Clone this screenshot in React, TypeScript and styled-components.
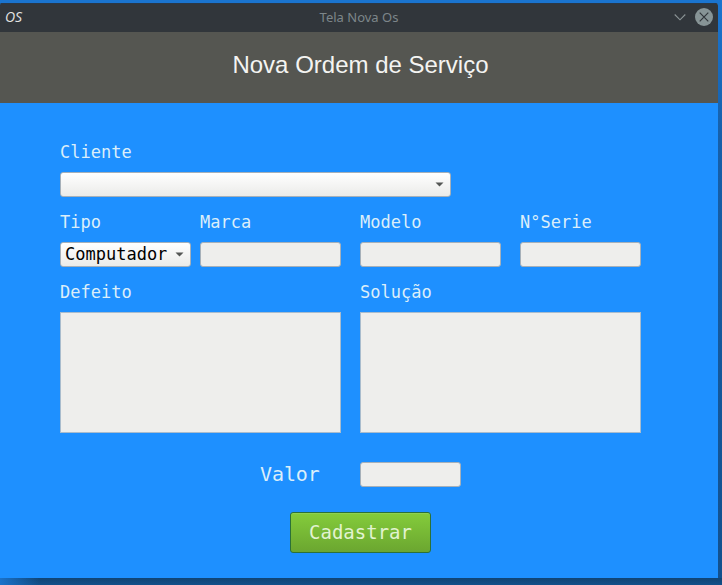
import React from 'react';
import styled, { createGlobalStyle } from 'styled-components';

const GlobalStyle = createGlobalStyle`
  * { box-sizing: border-box; }
  body { margin: 0; overflow: hidden; }
`;

const Desktop = styled.main`
  width: 722px;
  height: 585px;
  padding-top: 3px;
  overflow: hidden;
  background:
    linear-gradient(90deg, #1a72ca 0, rgba(17, 76, 132, 0) 40px) 0 578px / 100% 7px no-repeat,
    linear-gradient(#104474, #12508a) 0 578px / 100% 7px no-repeat,
    linear-gradient(180deg, #1a75d0 0, #165fa9 140px, #12508d 100%) 718px 0 / 4px 100% no-repeat,
    #1a74cf;
`;

const Window = styled.section`
  display: flex;
  flex-direction: column;
  width: 718px;
  height: 575px;
  border-radius: 2px 3px 0 0;
  overflow: hidden;
  background: #1e90ff;
`;

const TitleBar = styled.div`
  display: grid;
  grid-template-columns: 60px 1fr 60px;
  align-items: center;
  height: 29px;
  padding-bottom: 2px;
  background: #31363b;
  border-top: 1px solid #2a3847;
`;

const AppMark = styled.span`
  padding-left: 5px;
  font: italic 500 14px/26px 'Open Sans', sans-serif;
  letter-spacing: 0;
  color: #e4e4e4;
`;

const WindowTitle = styled.span`
  text-align: center;
  font: 13px/26px 'Noto Sans', sans-serif;
  color: #7d868a;
`;

const WindowControls = styled.div`
  display: flex;
  justify-content: flex-end;
  padding-right: 4px;
  svg { display: block; }
`;

const Header = styled.header`
  height: 71px;
  background: #555651;
  color: #f4f4f2;
  text-align: center;
`;

const Heading = styled.h1`
  margin: 0;
  padding-left: 3px;
  font: 400 24px/66px 'Liberation Sans', Arial, sans-serif;
`;

const Form = styled.div`
  display: flex;
  flex-direction: column;
  padding: 34px 0 0 60px;
  font-family: 'DejaVu Sans Mono', monospace;
`;

const Row = styled.div<{ $height: number }>`
  display: flex;
  height: ${p => p.$height}px;
`;

const Field = styled.label<{ $width: number; $gap?: number }>`
  display: flex;
  flex-direction: column;
  width: ${p => p.$width}px;
  margin-right: ${p => p.$gap ?? 0}px;
`;

const Caption = styled.span`
  height: 35px;
  font-size: 17px;
  line-height: 30px;
  color: #dbeefa;
`;

const Input = styled.input`
  display: block;
  width: 100%;
  height: 25px;
  padding: 0 4px;
  border: 1px solid #a6b0b9;
  border-radius: 3px;
  background: #eeeeec;
  outline: none;
`;

const TextArea = styled.textarea`
  display: block;
  width: 100%;
  height: 121px;
  border: 1px solid #a9bccd;
  border-radius: 0;
  background: #eeeeec;
  resize: none;
  outline: none;
`;

const Combo = styled.div`
  display: flex;
  align-items: center;
  justify-content: space-between;
  height: 25px;
  padding: 0 6px 0 4px;
  border: 1px solid #a6b0b9;
  border-radius: 3px;
  background: linear-gradient(#ffffff, #ebebe9);
  color: #000;
  font-size: 17px;
  line-height: 23px;
`;

const ValueRow = styled.label`
  display: flex;
  align-items: center;
  width: 401px;
  height: 25px;
  margin-top: 15px;
  padding-left: 200px;
  font-size: 20px;
  color: #dbeefa;
`;

const ValueCaption = styled.span`
  flex: 0 0 100px;
  padding-bottom: 2px;
  letter-spacing: -0.1px;
`;

const SubmitButton = styled.button`
  width: 141px;
  height: 41px;
  margin: 25px 0 0 230px;
  padding: 0;
  border: 1px solid #2c7137;
  border-radius: 3px;
  background: linear-gradient(#84cc3b, #6ba630);
  box-shadow: inset 0 1px 0 #8fd153;
  font: 19px/37px 'DejaVu Sans Mono', monospace;
  color: #e2f3d0;
`;

function Arrow() {
  return (
    <svg width="9" height="5" viewBox="0 0 9 5" aria-hidden="true">
      <path d="M.5.5h8L4.5 4.6z" fill="#555755" />
    </svg>
  );
}

interface EntryProps {
  label: string;
  width: number;
  gap?: number;
  children: React.ReactNode;
}

function Entry({ label, width, gap, children }: EntryProps) {
  return (
    <Field $width={width} $gap={gap}>
      <Caption>{label}</Caption>
      {children}
    </Field>
  );
}

export default function App() {
  return (
    <>
      <GlobalStyle />
      <Desktop>
        <Window>
          <TitleBar>
            <AppMark>OS</AppMark>
            <WindowTitle>Tela Nova Os</WindowTitle>
            <WindowControls>
              <svg width="42" height="20" viewBox="0 0 42 20" fill="none">
                <path d="M2.7 7.5l5.3 5.3L13.3 7.5" stroke="#8b9496" strokeWidth="1.1" />
                <circle cx="32" cy="10" r="9" fill="#879496" />
                <path d="M27.7 5.7l8.6 8.6m0-8.6l-8.6 8.6" stroke="#31363b" strokeWidth="1.2" />
              </svg>
            </WindowControls>
          </TitleBar>
          <Header>
            <Heading>Nova Ordem de Serviço</Heading>
          </Header>
          <Form>
            <Row $height={70}>
              <Entry label="Cliente" width={391}>
                <Combo><span /><Arrow /></Combo>
              </Entry>
            </Row>
            <Row $height={70}>
              <Entry label="Tipo" width={131} gap={9}>
                <Combo><span>Computador</span><Arrow /></Combo>
              </Entry>
              <Entry label="Marca" width={141} gap={19}><Input /></Entry>
              <Entry label="Modelo" width={141} gap={19}><Input /></Entry>
              <Entry label="N°Serie" width={121}><Input /></Entry>
            </Row>
            <Row $height={170}>
              <Entry label="Defeito" width={281} gap={19}><TextArea /></Entry>
              <Entry label="Solução" width={281}><TextArea /></Entry>
            </Row>
            <ValueRow>
              <ValueCaption>Valor</ValueCaption>
              <Input />
            </ValueRow>
            <SubmitButton>Cadastrar</SubmitButton>
          </Form>
        </Window>
      </Desktop>
    </>
  );
}
